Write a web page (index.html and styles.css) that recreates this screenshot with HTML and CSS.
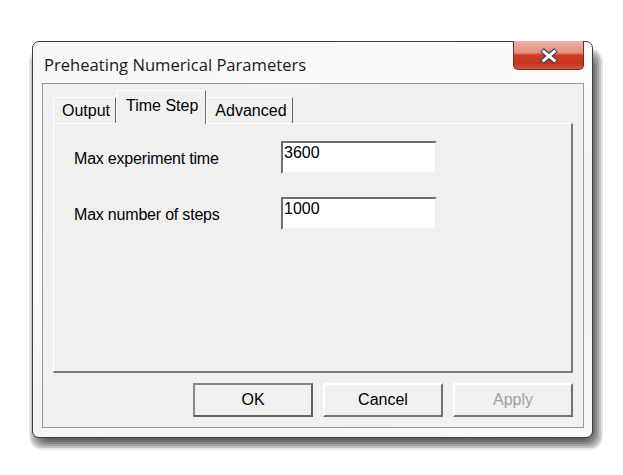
FILE: index.html
```html
<!DOCTYPE html>
<html>
<head>
<meta charset="utf-8">
<link rel="stylesheet" href="styles.css">
</head>
<body>
<div class="stage">
  <div class="shadow"><div class="sh"><div class="sh"><div class="sh"><div class="sh"><div class="sh"></div></div></div></div></div></div>
  <div class="window">
    <div class="titlebar">
      <span class="title">Preheating Numerical Parameters</span>
      <div class="close">
        <svg width="20" height="16" viewBox="0 0 20 16">
          <path d="M3 2 L17 14 M17 2 L3 14" stroke="#3a3d55" stroke-width="5.2" stroke-linecap="butt" fill="none"/>
          <path d="M3.6 2.6 L16.4 13.4 M16.4 2.6 L3.6 13.4" stroke="#ffffff" stroke-width="3" stroke-linecap="butt" fill="none"/>
        </svg>
      </div>
    </div>
    <div class="client">
      <div class="tabs">
        <div class="tab">Output</div>
        <div class="tab active">Time Step</div>
        <div class="tab">Advanced</div>
      </div>
      <div class="panel">
        <div class="form">
          <label class="label">Max experiment time</label>
          <div class="field">3600</div>
          <label class="label">Max number of steps</label>
          <div class="field">1000</div>
        </div>
      </div>
      <div class="buttons">
        <div class="btn default">OK</div>
        <div class="btn">Cancel</div>
        <div class="btn disabled">Apply</div>
      </div>
    </div>
  </div>
</div>
</body>
</html>
```

FILE: styles.css
```css
html, body {
  margin: 0;
  padding: 0;
  background: #ffffff;
}

.stage {
  position: relative;
  box-sizing: border-box;
  height: 475px;
  padding: 41px 0 0 32px;
}

/* soft drop shadow built from stacked translucent layers */
.shadow {
  position: absolute;
  left: 29px;
  top: 48px;
  width: 574px;
  height: 402px;
  box-sizing: border-box;
  padding: 2px;
  border-radius: 14px;
  background: rgba(0, 0, 0, 0.1);
}

.sh {
  box-sizing: border-box;
  width: 100%;
  height: 100%;
  padding: 2px;
  border-radius: 12px;
  background: rgba(0, 0, 0, 0.16);
}

.window {
  position: relative;
  width: 559px;
  height: 395px;
  border: 1px solid #3c3c3c;
  border-radius: 7px;
  background: linear-gradient(160deg, #f4f6f8 0%, #fbfbfc 40%, #f1f3f5 60%, #f7f8f9 100%);
  display: flex;
  flex-direction: column;
}

.titlebar {
  flex-shrink: 0;
  height: 41px;
  display: flex;
  align-items: center;
  padding-left: 11px;
}

.title {
  font-family: "Open Sans", "Noto Sans", sans-serif;
  font-size: 16.6px;
  color: #1a1a1a;
  margin-top: 3px;
}

.close {
  position: absolute;
  top: -1px;
  right: 8px;
  width: 69px;
  height: 28px;
  border: 1px solid #7a2a22;
  border-top: none;
  border-radius: 0 0 5px 5px;
  background: linear-gradient(#eeb0a8 0%, #e3907f 42%, #d03c26 50%, #c5331e 80%, #d2553f 100%);
  display: flex;
  align-items: center;
  justify-content: center;
}

.close svg {
  display: block;
  margin-top: 1px;
}

.client {
  margin: 0 8px 9px 9px;
  flex: 1;
  border: 1px solid #9a9a9a;
  background: #f0f0f0;
  padding: 10px 10px 0 10px;
  display: flex;
  flex-direction: column;
  font-family: "Liberation Sans", Arial, sans-serif;
  font-size: 16px;
  color: #000;
}

.tabs {
  flex-shrink: 0;
  height: 29px;
  display: flex;
  align-items: flex-end;
  position: relative;
  z-index: 2;
}

.tab {
  height: 24px;
  padding: 0 5px 0 8px;
  border-top: 1px solid #ffffff;
  border-left: 1px solid #ffffff;
  border-right: 1px solid #696969;
  display: flex;
  align-items: center;
  padding-top: 1px;
  background: #f0f0f0;
  line-height: 1;
}

.tab.active {
  height: 29px;
  margin-bottom: -1px;
  padding: 0 7px 4px 9px;
}

.panel {
  flex-shrink: 0;
  box-sizing: border-box;
  height: 250px;
  border-top: 1px solid #ffffff;
  border-left: 1px solid #ffffff;
  border-right: 2px solid #7a7a7a;
  border-bottom: 2px solid #7a7a7a;
  padding: 17px 0 0 20px;
}

.form {
  display: grid;
  grid-template-columns: 207px 156px;
  row-gap: 23px;
  align-items: center;
}

.label {
  font-size: 16px;
  letter-spacing: -0.2px;
  margin-top: 2px;
}

.field {
  height: 28px;
  border-top: 2px solid #6e6e6e;
  border-left: 2px solid #6e6e6e;
  border-right: 2px solid #f0f0f0;
  border-bottom: 2px solid #f0f0f0;
  background: #ffffff;
  padding: 1px 0 0 1px;
  box-sizing: content-box;
  font-size: 16px;
  line-height: 18px;
  width: 151px;
}

.buttons {
  flex-shrink: 0;
  display: flex;
  justify-content: flex-end;
  gap: 10px;
  margin-top: 10px;
}

.btn {
  width: 116px;
  height: 30px;
  border-top: 2px solid #ffffff;
  border-left: 2px solid #ffffff;
  border-right: 2px solid #707070;
  border-bottom: 2px solid #707070;
  display: flex;
  align-items: center;
  justify-content: center;
  font-size: 16px;
}

.btn.default {
  border: 2px solid #606060;
  border-top-color: #8a8a8a;
  border-left-color: #8a8a8a;
}

.btn.disabled {
  color: #a0a0a0;
}
```
